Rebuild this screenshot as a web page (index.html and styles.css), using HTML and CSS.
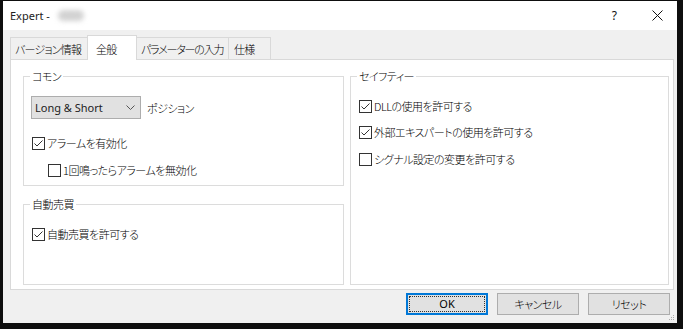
FILE: index.html
```html
<!DOCTYPE html>
<html lang="ja">
<head>
<meta charset="utf-8">
<title>Expert</title>
<link rel="stylesheet" href="styles.css">
</head>
<body>
<div class="window">
  <div class="titlebar">
    <span class="title">Expert - </span><span class="blurred"></span>
    <span class="spacer"></span>
    <span class="help">?</span>
    <svg class="close" width="11" height="11" viewBox="0 0 11 11"><path d="M0.5 0.5L10.5 10.5M10.5 0.5L0.5 10.5" stroke="#111" stroke-width="1" fill="none"/></svg>
  </div>
  <div class="content">
    <div class="tabs">
      <div class="tab t1">バージョン情報</div>
      <div class="tab active t2">全般</div>
      <div class="tab t3">パラメーターの入力</div>
      <div class="tab t4">仕様</div>
    </div>
    <div class="panel">
      <div class="left">
        <fieldset class="group g-common">
          <legend>コモン</legend>
          <div class="combo-row">
            <div class="combo"><span>Long &amp; Short</span><svg class="chev" width="9" height="5" viewBox="0 0 9 5"><path d="M0.5 0.5L4.5 4.5L8.5 0.5" stroke="#555" fill="none"/></svg></div>
            <span class="jp">ポジション</span>
          </div>
          <label class="check r1"><svg class="cb" viewBox="0 0 13 13"><rect x="0.5" y="0.5" width="12" height="12" fill="#fff" stroke="#333"/><path d="M2.5 6.5L5 9L10.5 3.5" fill="none" stroke="#333"/></svg><span class="jp">アラームを有効化</span></label>
          <label class="check r2 indent"><svg class="cb" viewBox="0 0 13 13"><rect x="0.5" y="0.5" width="12" height="12" fill="#fff" stroke="#333"/></svg><span class="jp">1回鳴ったらアラームを無効化</span></label>
        </fieldset>
        <fieldset class="group g-auto">
          <legend>自動売買</legend>
          <label class="check"><svg class="cb" viewBox="0 0 13 13"><rect x="0.5" y="0.5" width="12" height="12" fill="#fff" stroke="#333"/><path d="M2.5 6.5L5 9L10.5 3.5" fill="none" stroke="#333"/></svg><span class="jp">自動売買を許可する</span></label>
        </fieldset>
      </div>
      <fieldset class="group g-safety">
        <legend>セイフティー</legend>
        <label class="check"><svg class="cb" viewBox="0 0 13 13"><rect x="0.5" y="0.5" width="12" height="12" fill="#fff" stroke="#333"/><path d="M2.5 6.5L5 9L10.5 3.5" fill="none" stroke="#333"/></svg><span class="jp">DLLの使用を許可する</span></label>
        <label class="check s2"><svg class="cb" viewBox="0 0 13 13"><rect x="0.5" y="0.5" width="12" height="12" fill="#fff" stroke="#333"/><path d="M2.5 6.5L5 9L10.5 3.5" fill="none" stroke="#333"/></svg><span class="jp">外部エキスパートの使用を許可する</span></label>
        <label class="check s3"><svg class="cb" viewBox="0 0 13 13"><rect x="0.5" y="0.5" width="12" height="12" fill="#fff" stroke="#333"/></svg><span class="jp">シグナル設定の変更を許可する</span></label>
      </fieldset>
    </div>
    <div class="buttons">
      <button class="btn default"><span>OK</span></button>
      <button class="btn"><span class="jp">キャンセル</span></button>
      <button class="btn"><span class="jp">リセット</span></button>
    </div>
  </div>
  <svg class="grip" width="6" height="6" viewBox="0 0 6 6"><g fill="#aaa"><rect x="4" y="0" width="1" height="1"/><rect x="2" y="2" width="1" height="1"/><rect x="4" y="2" width="1" height="1"/><rect x="0" y="4" width="1" height="1"/><rect x="2" y="4" width="1" height="1"/><rect x="4" y="4" width="1" height="1"/></g></svg>
</div>
</body>
</html>
```

FILE: styles.css
```css
html, body {
  margin: 0;
  padding: 0;
}
body {
  background: #0e0e0e;
  width: 683px;
  height: 329px;
  overflow: hidden;
  font-family: "Noto Sans", "Noto Sans CJK JP", sans-serif;
  font-size: 11px;
  color: #000;
  padding-top: 1px;
  box-sizing: border-box;
}
.jp, legend, .tab {
  font-family: "Noto Sans CJK JP", sans-serif;
  font-feature-settings: "palt";
  letter-spacing: -0.5px;
  font-weight: 300;
}
.window {
  position: relative;
  margin-left: 3px;
  width: 674px;
  height: 322px;
  background: #f0f0f0;
  display: flex;
  flex-direction: column;
}
.titlebar {
  height: 29px;
  background: #fff;
  display: flex;
  align-items: center;
  padding-left: 7px;
  padding-right: 14px;
}
.title {
  white-space: pre;
  color: #222;
}
.blurred {
  margin-left: 5px;
  background: #d2d2d2;
  border-radius: 6px;
  filter: blur(2.5px);
  height: 11px;
  width: 26px;
}
.spacer { flex: 1; }
.help {
  font-size: 12px;
  margin-right: 35px;
  color: #111;
}
.close { display: block; }
.content {
  flex: 1;
  display: flex;
  flex-direction: column;
  padding: 5px 3px 0 7px;
}
.tabs {
  display: flex;
  align-items: flex-end;
  height: 24px;
  position: relative;
  z-index: 1;
}
.tab {
  box-sizing: border-box;
  height: 22px;
  border: 1px solid #d9d9d9;
  border-bottom: none;
  background: #f0f0f0;
  line-height: 18px;
  padding-top: 2px;
  white-space: nowrap;
  font-size: 11px;
  letter-spacing: -0.8px;
  overflow: hidden;
}
.tab + .tab { margin-left: -1px; }
.t1 { width: 78px; padding-left: 4px; }
.t2 { width: 50px; padding-left: 8px; }
.t3 { width: 93px; padding-left: 4px; letter-spacing: -1.2px; }
.t4 { width: 43px; padding-left: 5px; }
.tab.active {
  height: 25px;
  background: #fff;
  margin-bottom: -1px;
  padding-top: 4px;
  position: relative;
  z-index: 2;
}
.panel {
  box-sizing: border-box;
  height: 231px;
  background: #fff;
  border: 1px solid #d9d9d9;
  padding: 9px 3px 4px 12px;
  display: grid;
  grid-template-columns: 321px 319px;
  column-gap: 6px;
}
.left {
  display: flex;
  flex-direction: column;
  gap: 11px;
}
.group {
  margin: 0;
  min-width: 0;
  border: 1px solid #dcdcdc;
  padding: 0 8px;
  box-sizing: border-box;
}
.group legend {
  padding: 0 2px;
  margin-left: -2px;
  line-height: 14px;
  font-size: 11px;
}
.g-common {
  height: 117px;
  padding-top: 13px;
}
.g-auto {
  flex: 1;
  padding-top: 14px;
}
.g-safety {
  padding-top: 14px;
}
.combo-row {
  display: flex;
  align-items: center;
  gap: 6px;
}
.combo {
  box-sizing: border-box;
  margin-left: -1px;
  width: 110px;
  height: 23px;
  background: #e1e1e1;
  border: 1px solid #adadad;
  display: flex;
  align-items: center;
  padding-left: 3px;
  padding-right: 5px;
  justify-content: space-between;
  color: #222;
}
.chev { display: block; }
.check {
  display: flex;
  align-items: center;
  gap: 2px;
  height: 18px;
}
.cb {
  width: 13px;
  height: 13px;
  display: block;
  flex: none;
}
.r1 { margin-top: 15px; }
.r2 { margin-top: 9px; }
.indent { margin-left: 16px; }
.s2 { margin-top: 8px; }
.s3 { margin-top: 9px; }
.buttons {
  display: flex;
  justify-content: flex-end;
  gap: 9px;
  margin-top: 3px;
  padding-right: 4px;
}
.btn {
  box-sizing: border-box;
  width: 82px;
  height: 22px;
  margin: 0;
  background: #e1e1e1;
  border: 1px solid #adadad;
  font-family: "Noto Sans", "Noto Sans CJK JP", sans-serif;
  font-size: 11px;
  color: #000;
  padding: 0;
  line-height: 18px;
}
.btn.default {
  border: 2px solid #0078d7;
  outline: 1px dotted #333;
  outline-offset: -4px;
}
.grip {
  position: absolute;
  right: 2px;
  bottom: 2px;
}
```
